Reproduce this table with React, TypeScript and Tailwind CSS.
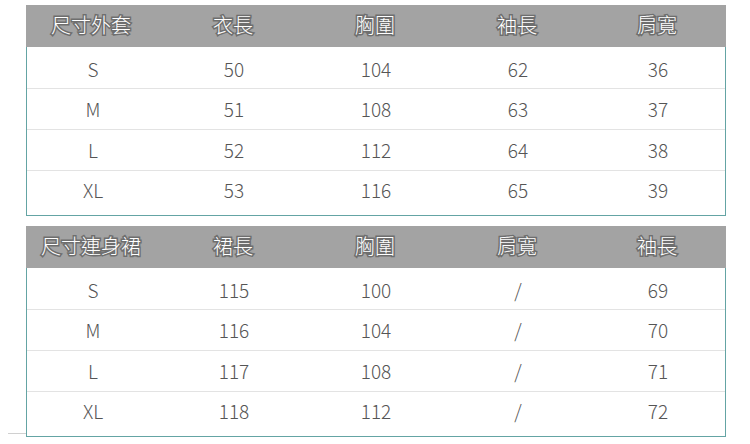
const jacket = {
  title: '尺寸外套',
  cols: ['衣長', '胸圍', '袖長', '肩寬'],
  rows: [
    ['S', '50', '104', '62', '36'],
    ['M', '51', '108', '63', '37'],
    ['L', '52', '112', '64', '38'],
    ['XL', '53', '116', '65', '39'],
  ],
};

const dress = {
  title: '尺寸連身裙',
  cols: ['裙長', '胸圍', '肩寬', '袖長'],
  rows: [
    ['S', '115', '100', '/', '69'],
    ['M', '116', '104', '/', '70'],
    ['L', '117', '108', '/', '71'],
    ['XL', '118', '112', '/', '72'],
  ],
};

// row heights differ a little in the original, the last one is taller
const rowCls = [
  'h-[42px] pt-[3px] border-b border-[#e3e3e3]',
  'h-[41px] pt-[1px] border-b border-[#e3e3e3]',
  'h-[41px] pt-[1px] border-b border-[#e3e3e3]',
  'h-[44px] pb-[5px]',
];

interface ISizeTable {
  title: string;
  cols: string[];
  rows: string[][];
}

function SizeTable({ title, cols, rows }: ISizeTable) {
  return (
    <div className="w-[700px]">
      <div className="grid h-[42px] grid-cols-[136px_142px_142px_142px_138px] items-center bg-[#a3a3a3] pb-[2px] text-center text-[20px] text-white [-webkit-text-stroke:3px_#6e6e6e] [paint-order:stroke_fill]">
        {[title, ...cols].map((c, j) => (
          <div key={c} className={j === 0 ? 'pr-[6px]' : ''}>
            {c}
          </div>
        ))}
      </div>
      <div className="border-x border-b border-[#64a4a4]">
        {rows.map((r, i) => (
          <div
            key={r[0]}
            className={`grid grid-cols-[136px_142px_142px_142px_138px] items-center text-center ${rowCls[i]}`}
          >
            {r.map((v, j) => (
              <div key={j} className={j === 0 ? 'pr-[4px]' : ''}>
                {v}
              </div>
            ))}
          </div>
        ))}
      </div>
    </div>
  );
}

export default function App() {
  return (
    <div className="h-[444px] w-[750px] bg-white pl-[8px] pt-[5px] font-['Noto_Sans_CJK_TC','Noto_Sans',sans-serif] text-[19px] font-light text-[#555]">
      <div className="ml-[18px]">
        <SizeTable {...jacket} />
      </div>
      <div className="mt-[10px] flex items-end">
        <div className="mb-[3px] h-px w-[18px] bg-[#d0d0d0]" />
        <SizeTable {...dress} />
      </div>
    </div>
  );
}
